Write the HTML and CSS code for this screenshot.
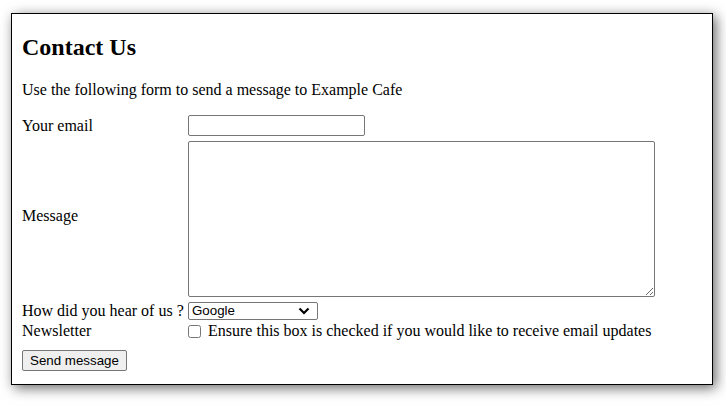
FILE: index.html
```html
<!DOCTYPE html>
<html>
<head>
<meta charset="utf-8">
<title>Contact Us</title>
<link rel="stylesheet" href="styles.css">
</head>
<body>
<div class="card">
  <h2 class="title">Contact Us</h2>
  <p class="intro">Use the following form to send a message to Example Cafe</p>
  <form class="form">
    <div class="fields">
      <label class="label row-email" for="email">Your email</label>
      <div class="control row-email"><input id="email" class="email" type="text"></div>

      <label class="label label-message row-message" for="message">Message</label>
      <div class="control row-message"><textarea id="message" class="message"></textarea></div>

      <label class="label row-source" for="source">How did you hear of us ?</label>
      <div class="control row-source">
        <span class="select-wrap">
          <select id="source" class="source"><option>Google</option><option>Friend</option><option>Other</option></select>
          <svg class="chevron" width="12" height="8" viewBox="0 0 12 8" aria-hidden="true"><path d="M1.5 1.5 L6 6 L10.5 1.5" fill="none" stroke="#000" stroke-width="2.2"/></svg>
        </span>
      </div>

      <div class="label row-news">Newsletter</div>
      <div class="control row-news"><input class="check" type="checkbox" id="news"> <label for="news">Ensure this box is checked if you would like to receive email updates</label></div>
    </div>
    <div class="actions"><button class="send" type="button">Send message</button></div>
  </form>
</div>
</body>
</html>
```
FILE: styles.css
```css
html, body {
  margin: 0;
  background: #ffffff;
}
body {
  padding: 13px 0 28px 11px;
  font-family: "Liberation Serif", "Times New Roman", serif;
  font-size: 16px;
  color: #000;
}
.card {
  width: 680px;
  height: 370px;
  padding: 0 10px;
  border: 1px solid #000;
  background: #fff;
  box-shadow: 3px 3px 12px rgba(0, 0, 0, 0.6);
}
.title {
  font-size: 24px;
  font-weight: bold;
  margin: 20px 0;
  line-height: 27px;
}
.intro {
  margin: 16px 0 0;
  line-height: 18px;
}
.form {
  margin: 0;
}
.fields {
  display: grid;
  grid-template-columns: 166px auto;
  align-items: center;
  margin-top: 16px;
  line-height: 18px;
}
.label {
  white-space: nowrap;
}
.label-message {
  padding-bottom: 6px;
}
.control {
  display: flex;
  align-items: center;
}
.row-message {
  margin-top: 5px;
}
.row-source {
  margin-top: 5px;
}
.row-news {
  margin-top: 2px;
}
.email {
  width: 177px;
  height: 21px;
  box-sizing: border-box;
  border: 1px solid #767676;
  border-radius: 2px;
  padding: 1px 2px;
  margin: 0;
  font-family: "Liberation Sans", Arial, sans-serif;
  font-size: 13.33px;
}
.message {
  display: block;
  width: 467px;
  height: 156px;
  box-sizing: border-box;
  border: 1px solid #767676;
  border-radius: 2px;
  margin: 0;
  font-family: "Liberation Mono", monospace;
  font-size: 13.33px;
}
.select-wrap {
  position: relative;
  display: inline-block;
  height: 18px;
}
.source {
  appearance: none;
  -webkit-appearance: none;
  width: 130px;
  height: 18px;
  box-sizing: border-box;
  border: 1px solid #767676;
  border-radius: 2px;
  margin: 0;
  padding: 0 0 0 3px;
  font-family: "Liberation Sans", Arial, sans-serif;
  font-size: 13.33px;
  line-height: 16px;
  background: #fff;
  color: #000;
  display: block;
}
.chevron {
  position: absolute;
  right: 8px;
  top: 5px;
  pointer-events: none;
}
.check {
  width: 13px;
  height: 13px;
  margin: 0 4px 0 0;
  flex: none;
}
.control label {
  white-space: nowrap;
  margin-left: 3px;
}
.actions {
  margin-top: 10px;
}
.send {
  display: block;
  font-family: "Liberation Sans", Arial, sans-serif;
  font-size: 13.33px;
  padding: 0 7px;
  border: 1px solid #767676;
  border-radius: 2px;
  background: #efefef;
  color: #000;
  height: 21px;
  line-height: 19px;
}
```
